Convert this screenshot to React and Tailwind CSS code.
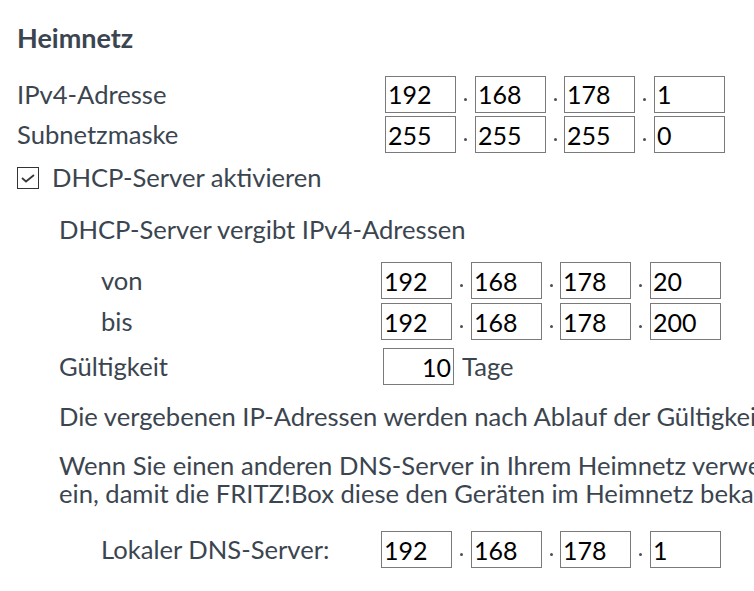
import React from "react";

const labelFont = { fontFamily: "Lato, 'Noto Sans', sans-serif" };

const IpGroup = ({ parts }) => {
  return (
    <div className="flex items-center">
      {parts.map((p, i) => (
        <React.Fragment key={i}>
          {i > 0 && (
            <div className={`flex h-[37px] items-end justify-center pb-[12px] ${i === 2 ? "w-[18px]" : "w-[19px]"}`}>
              <span className="block h-[3px] w-[3px] rounded-full bg-[#4a4f55]" />
            </div>
          )}
          <input
            type="text"
            defaultValue={p}
            className="h-[37px] w-[71px] border border-[#7a7a7a] bg-white pl-[2px] text-[25px] leading-none text-black outline-none"
          />
        </React.Fragment>
      ))}
    </div>
  );
};

export default function App() {
  return (
    <div
      className="h-[591px] w-[754px] overflow-hidden bg-white text-[25.6px] text-[#3b4550]"
      style={labelFont}
    >
      <div className="pl-[17px]">
        {/* Heading */}
        <div className="flex h-[75px] items-center pt-[2px]">
          <h2 className="text-[27px] font-bold text-[#3b4550]">Heimnetz</h2>
        </div>

        {/* IPv4 + Subnet */}
        <div className="flex h-[37px] items-center pt-[1px]">
          <div className="w-[368px]">IPv4-Adresse</div>
          <IpGroup parts={["192", "168", "178", "1"]} />
        </div>
        <div className="mt-[4px] flex h-[37px] items-center">
          <div className="w-[368px]">Subnetzmaske</div>
          <IpGroup parts={["255", "255", "255", "0"]} />
        </div>

        {/* DHCP checkbox */}
        <div className="mt-[7px] flex h-[35px] items-center">
          <span className="flex h-[22px] w-[22px] items-center justify-center border border-[#333]">
            <svg width="16" height="12" viewBox="0 0 16 12">
              <polyline points="2,6 6,9.5 14,3" fill="none" stroke="#3a3a3a" strokeWidth="1.8" />
            </svg>
          </span>
          <span className="ml-[13px]">DHCP-Server aktivieren</span>
        </div>
      </div>

      <div className="pl-[59px]">
        <div className="mt-[15px] flex h-[38px] items-center">DHCP-Server vergibt IPv4-Adressen</div>

        <div className="mt-[14px] flex h-[37px] items-center pl-[42px]">
          <div className="w-[280px]">von</div>
          <IpGroup parts={["192", "168", "178", "20"]} />
        </div>
        <div className="mt-[4px] flex h-[37px] items-center pl-[42px]">
          <div className="w-[280px]">bis</div>
          <IpGroup parts={["192", "168", "178", "200"]} />
        </div>

        <div className="mt-[8px] flex h-[37px] items-center">
          <div className="w-[324px]">Gültigkeit</div>
          <input
            type="text"
            defaultValue="10"
            className="h-[37px] w-[71px] border border-[#7a7a7a] bg-white pr-[2px] text-right text-[25px] leading-none text-black outline-none"
          />
          <span className="ml-[8px]">Tage</span>
        </div>

        <div className="mt-[13px] flex h-[36px] items-center whitespace-nowrap">
          Die vergebenen IP-Adressen werden nach Ablauf der Gültigkeit neu vergeben.
        </div>

        <div className="mt-[17px] whitespace-nowrap leading-[28px]">
          <div>Wenn Sie einen anderen DNS-Server in Ihrem Heimnetz verwenden, tragen Sie dessen IP-Adresse hier</div>
          <div>ein, damit die FRITZ!Box diese den Geräten im Heimnetz bekannt gibt.</div>
        </div>

        <div className="mt-[24px] flex h-[37px] items-center pl-[42px]">
          <div className="w-[280px]">Lokaler DNS-Server:</div>
          <IpGroup parts={["192", "168", "178", "1"]} />
        </div>
      </div>
    </div>
  );
}
